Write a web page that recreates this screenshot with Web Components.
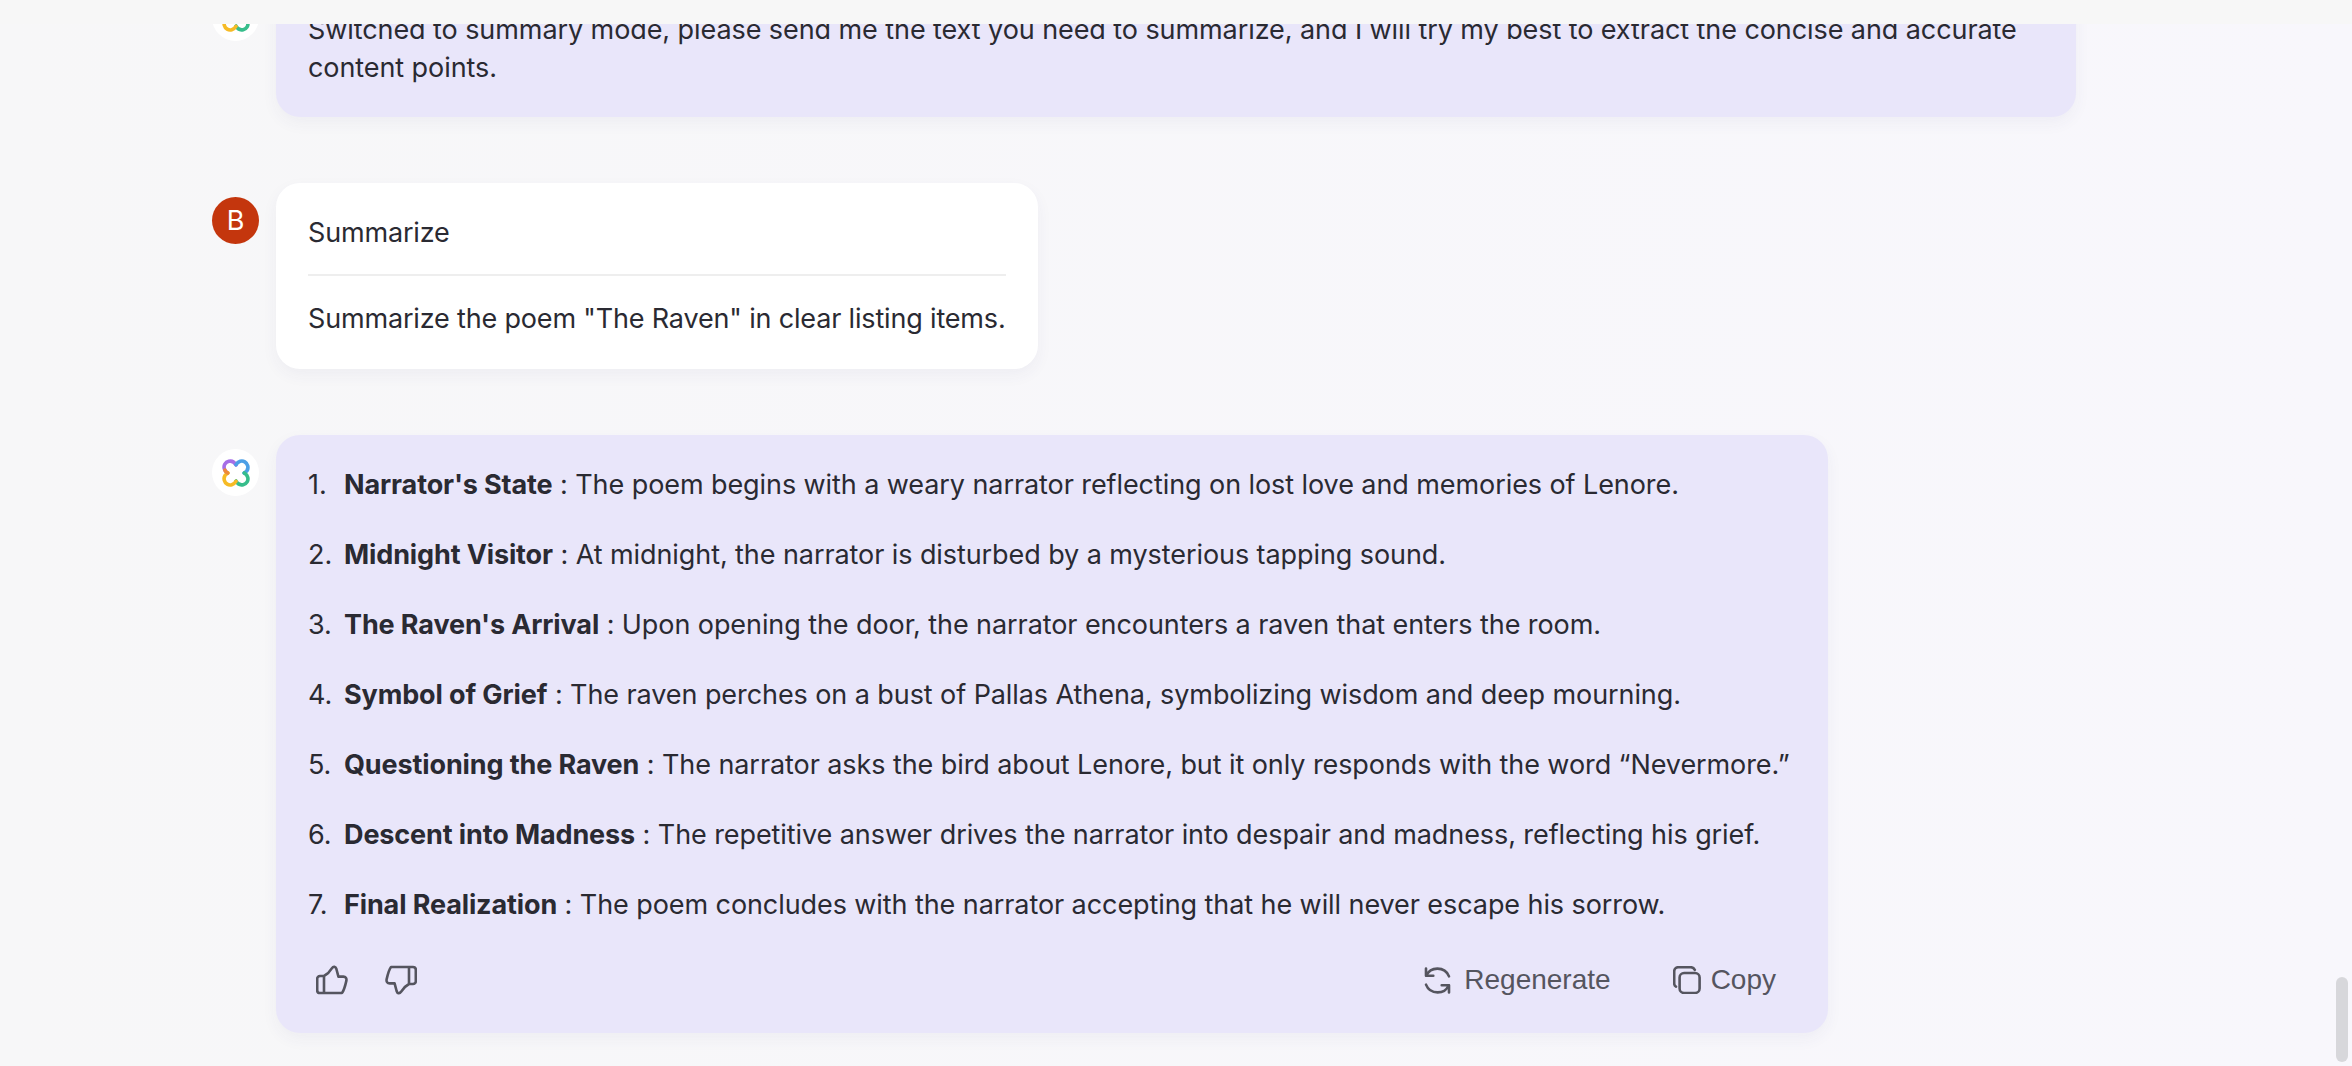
<!DOCTYPE html>
<html>
<head>
<meta charset="utf-8">
<title>Chat</title>
<style>
  html, body { margin: 0; padding: 0; height: 100%; overflow: hidden; background: #f7f7f8; }
</style>
</head>
<body>
<chat-app>
  <chat-message kind="bot">
    Switched to summary mode, please send me the text you need to summarize, and I will try my best to extract the concise and accurate content points.
  </chat-message>

  <chat-message kind="user">
    <user-prompt mode="Summarize">Summarize the poem "The Raven" in clear listing items.</user-prompt>
  </chat-message>

  <chat-message kind="bot">
    <list-item n="1." title="Narrator's State">: The poem begins with a weary narrator reflecting on lost love and memories of Lenore.</list-item>
    <list-item n="2." title="Midnight Visitor">: At midnight, the narrator is disturbed by a mysterious tapping sound.</list-item>
    <list-item n="3." title="The Raven's Arrival">: Upon opening the door, the narrator encounters a raven that enters the room.</list-item>
    <list-item n="4." title="Symbol of Grief">: The raven perches on a bust of Pallas Athena, symbolizing wisdom and deep mourning.</list-item>
    <list-item n="5." title="Questioning the Raven">: The narrator asks the bird about Lenore, but it only responds with the word “Nevermore.”</list-item>
    <list-item n="6." title="Descent into Madness">: The repetitive answer drives the narrator into despair and madness, reflecting his grief.</list-item>
    <list-item n="7." title="Final Realization">: The poem concludes with the narrator accepting that he will never escape his sorrow.</list-item>
    <message-actions slot="footer"></message-actions>
  </chat-message>
</chat-app>

<script>
class ChatApp extends HTMLElement {
    constructor() {
        super();
        this.attachShadow({mode: 'open'});
        this.shadowRoot.innerHTML = `
            <style>
                :host {
                    display: flex;
                    flex-direction: column;
                    height: 100vh;
                    position: relative;
                    font-family: Inter, "Liberation Sans", sans-serif;
                    color: #2a2a32;
                    background: #f7f7f7;
                }
                .scroller {
                    flex: 1;
                    margin-top: 24px;
                    overflow: hidden;
                    background: linear-gradient(90deg, #f7f7f8, #f8f7fc);
                }
                .thread {
                    display: flex;
                    flex-direction: column;
                    gap: 66px;
                    margin-top: -44px;
                    padding-left: 212px;
                }
                .thumb {
                    position: absolute;
                    right: 4px;
                    top: 977px;
                    width: 12px;
                    height: 85px;
                    border-radius: 6px;
                    background: #d7d7db;
                }
            </style>
            <div class="scroller"><div class="thread"><slot></slot></div></div>
            <div class="thumb"></div>
        `;
    }
}

class ChatMessage extends HTMLElement {
    constructor() {
        super();
        this.attachShadow({mode: 'open'});
    }

    connectedCallback() {
        const isUser = this.getAttribute('kind') === 'user';
        const avatar = isUser
            ? '<div class="avatar user">B</div>'
            : `<div class="avatar bot">
                <svg width="28" height="28" viewBox="0 0 28 28" fill="none" stroke-width="3.6" stroke-linecap="round">
                    <path stroke="#a66ee6" d="M14 6C12.4 3 9.5 1.6 6.8 2.3C3.2 3.2 1.4 6.6 2.3 9.8C2.8 11.6 4 13 5.6 14"/>
                    <path stroke="#4c9fe6" transform="rotate(90 14 14)" d="M14 6C12.4 3 9.5 1.6 6.8 2.3C3.2 3.2 1.4 6.6 2.3 9.8C2.8 11.6 4 13 5.6 14"/>
                    <path stroke="#36bd8b" transform="rotate(180 14 14)" d="M14 6C12.4 3 9.5 1.6 6.8 2.3C3.2 3.2 1.4 6.6 2.3 9.8C2.8 11.6 4 13 5.6 14"/>
                    <path stroke="#f6bb26" transform="rotate(270 14 14)" d="M14 6C12.4 3 9.5 1.6 6.8 2.3C3.2 3.2 1.4 6.6 2.3 9.8C2.8 11.6 4 13 5.6 14"/>
                    <path stroke="#ee8a3a" d="M2.9 11.2C3.4 12.4 4.4 13.4 5.6 14"/>
                </svg>
            </div>`;
        this.shadowRoot.innerHTML = `
            <style>
                :host {
                    display: flex;
                    align-items: flex-start;
                    gap: 17px;
                }
                .avatar {
                    flex: none;
                    width: 47px;
                    height: 47px;
                    margin-top: 14px;
                    border-radius: 50%;
                    display: flex;
                    align-items: center;
                    justify-content: center;
                }
                .user {
                    background: #c4360d;
                    color: #fff;
                    font-size: 27px;
                }
                .bot {
                    background: #fff;
                }
                .bubble {
                    box-sizing: border-box;
                    width: fit-content;
                    min-width: 1552px;
                    max-width: 1800px;
                    padding: 31px 32px 30px;
                    border-radius: 24px;
                    font-size: 27px;
                    letter-spacing: -0.08px;
                    line-height: 38px;
                    background: #e9e6fa;
                    box-shadow: 0 6px 16px rgba(60, 50, 120, 0.05);
                }
                :host([kind="user"]) .bubble {
                    min-width: 0;
                    background: #fff;
                    padding: 0 32px;
                }
            </style>
            ${avatar}
            <div class="bubble"><slot></slot><slot name="footer"></slot></div>
        `;
    }
}

class UserPrompt extends HTMLElement {
    constructor() {
        super();
        this.attachShadow({mode: 'open'});
    }

    connectedCallback() {
        this.shadowRoot.innerHTML = `
            <style>
                :host { display: block; letter-spacing: -0.17px; }
                .mode {
                    padding: 31px 0 22px;
                    border-bottom: 2px solid #eeeeee;
                }
                .text { padding: 24px 0 31px; }
            </style>
            <div class="mode">${this.getAttribute('mode')}</div>
            <div class="text"><slot></slot></div>
        `;
    }
}

class ListItem extends HTMLElement {
    constructor() {
        super();
        this.attachShadow({mode: 'open'});
    }

    connectedCallback() {
        this.shadowRoot.innerHTML = `
            <style>
                :host {
                    display: flex;
                    margin-bottom: 32px;
                    white-space: nowrap;
                }
                .n { width: 36px; flex: none; }
                b { font-weight: 650; letter-spacing: -0.12px; }
            </style>
            <span class="n">${this.getAttribute('n')}</span>
            <span><b>${this.getAttribute('title')}</b> <slot></slot></span>
        `;
    }
}

class MessageActions extends HTMLElement {
    constructor() {
        super();
        this.attachShadow({mode: 'open'});
        const thumb = 'M8 11H4C2.3 11 1.2 12.2 1.2 13.8V25.2C1.2 26.8 2.3 28 4 28H26C27.6 26 29.4 20 30.4 15.6C30.8 13.2 29.6 11.6 27.4 11.6H22.4L20.4 4C19.6 1.4 17.4 1 16 3.2C14 6.6 11 9.4 8 11ZM8 11V28';
        this.shadowRoot.innerHTML = `
            <style>
                :host {
                    display: flex;
                    align-items: center;
                    height: 40px;
                    margin-top: 36px;
                    margin-bottom: 3px;
                    padding: 0 20px 0 8px;
                    font-family: "Liberation Sans", Arial, sans-serif;
                    font-size: 28px;
                    letter-spacing: 0;
                    color: #55555f;
                }
                svg { display: block; fill: none; stroke: #55555f; stroke-width: 2.6; stroke-linecap: round; stroke-linejoin: round; }
                .thumbs { display: flex; gap: 37px; margin-right: auto; }
                .btn { display: flex; align-items: center; gap: 13px; }
                .btn + .btn { margin-left: 62px; gap: 10px; }
            </style>
            <div class="thumbs">
                <svg width="32" height="30" viewBox="0 0 32 30"><path d="${thumb}"/></svg>
                <svg width="32" height="30" viewBox="0 0 32 30"><path transform="rotate(180 16 15)" d="${thumb}"/></svg>
            </div>
            <div class="btn">
                <svg width="27" height="27" viewBox="0 0 27 27">
                    <path d="M2 1.5V8.8H9.3"/>
                    <path d="M2.4 8.6C4.2 4.4 8.4 1.6 13.4 1.6C18.8 1.6 23.2 4.8 25 9.4"/>
                    <path d="M25 25.5V18.2H17.7"/>
                    <path d="M24.6 18.4C22.8 22.6 18.6 25.4 13.6 25.4C8.2 25.4 3.8 22.2 2 17.6"/>
                </svg>
                <span>Regenerate</span>
            </div>
            <div class="btn">
                <svg width="28" height="28" viewBox="0 0 28 28">
                    <rect x="6.6" y="7" width="20" height="20" rx="4.5"/>
                    <path d="M3 20.6C1.8 20 1.2 18.8 1.2 17.4V5.4C1.2 3 3 1.2 5.4 1.2H17.6C19.6 1.2 21 2.2 21.8 3.8"/>
                </svg>
                <span>Copy</span>
            </div>
        `;
    }
}

customElements.define('chat-app', ChatApp);
customElements.define('chat-message', ChatMessage);
customElements.define('user-prompt', UserPrompt);
customElements.define('list-item', ListItem);
customElements.define('message-actions', MessageActions);
</script>
</body>
</html>
